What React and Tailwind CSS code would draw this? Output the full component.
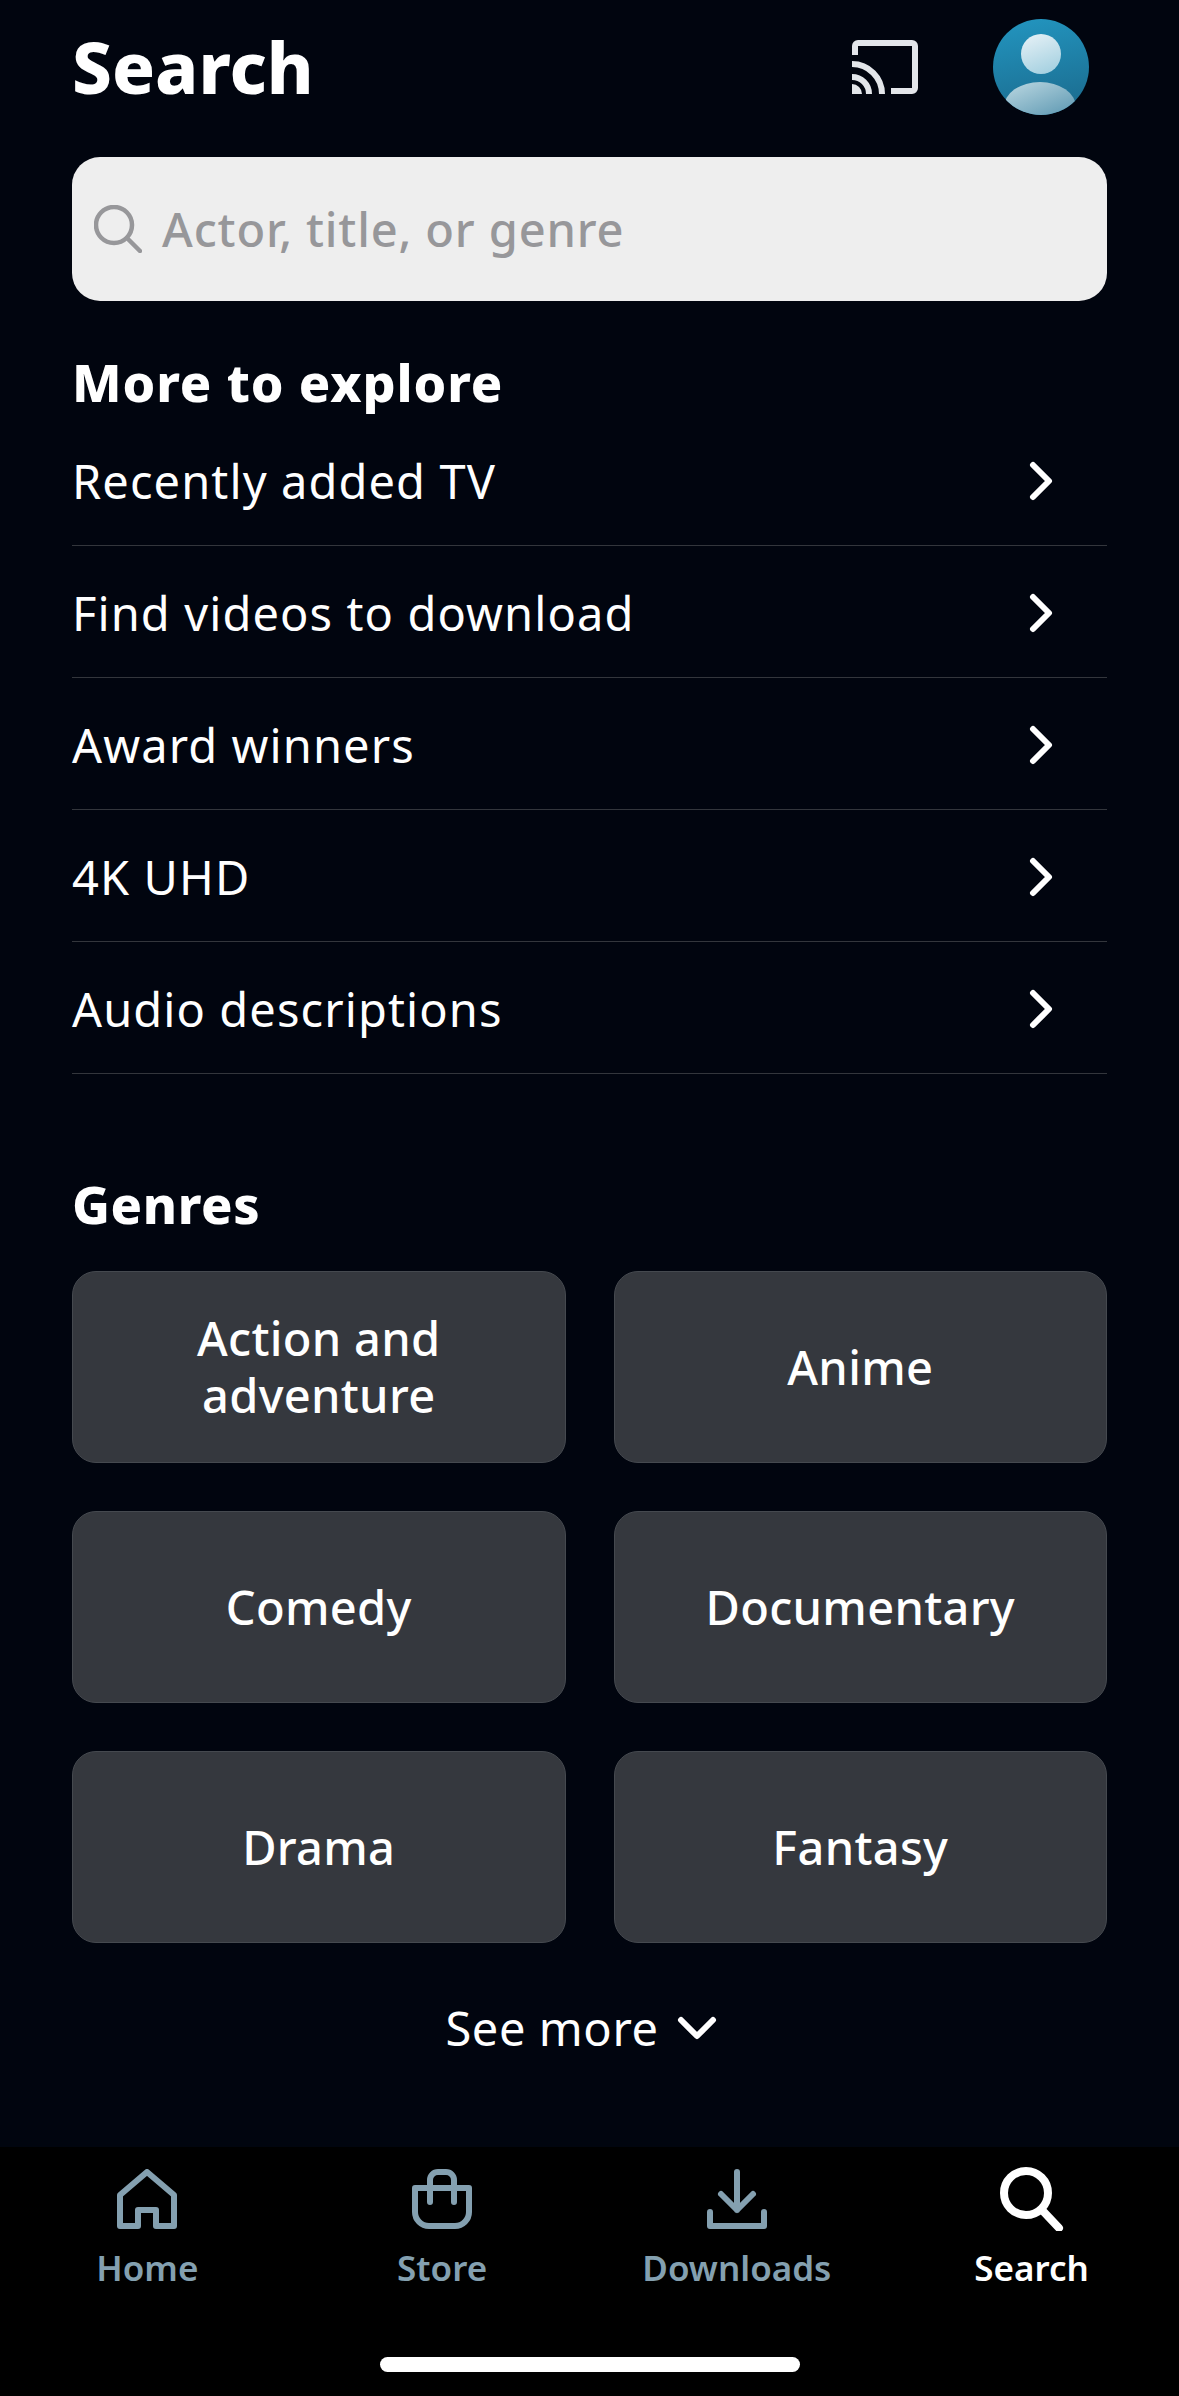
const FONT = "font-['Noto_Sans',sans-serif]"

const exploreRows = ['Recently added TV', 'Find videos to download', 'Award winners', '4K UHD', 'Audio descriptions']

const genres = ['Action and adventure', 'Anime', 'Comedy', 'Documentary', 'Drama', 'Fantasy']

function CastIcon() {
  return (
    <svg width="66" height="54" viewBox="0 0 66 54" fill="none" stroke="#e3e6ea" strokeWidth="6">
      <path d="M3 15V6a3 3 0 0 1 3-3h54a3 3 0 0 1 3 3v42a3 3 0 0 1-3 3H39" />
      <path d="M0 24a30 30 0 0 1 30 30" />
      <path d="M0 37a17 17 0 0 1 17 17" />
      <path d="M0 44a10 10 0 0 1 10 10H0z" fill="#e3e6ea" stroke="none" />
    </svg>
  )
}

function Avatar() {
  return (
    <svg width="96" height="96" viewBox="0 0 96 96">
      <defs>
        <linearGradient id="avatarBg" x1="0.4" y1="0" x2="0.6" y2="1">
          <stop offset="0" stopColor="#2293bd" />
          <stop offset="1" stopColor="#1b6b8e" />
        </linearGradient>
        <linearGradient id="avatarHead" x1="0.3" y1="0" x2="0.7" y2="1">
          <stop offset="0" stopColor="#e2eff5" />
          <stop offset="1" stopColor="#a4d0e0" />
        </linearGradient>
        <linearGradient id="avatarBody" x1="0.2" y1="0" x2="0.8" y2="1">
          <stop offset="0" stopColor="#b4d3de" />
          <stop offset="1" stopColor="#4a8ba8" />
        </linearGradient>
        <clipPath id="avatarClip">
          <circle cx="48" cy="48" r="48" />
        </clipPath>
      </defs>
      <circle cx="48" cy="48" r="48" fill="url(#avatarBg)" />
      <circle cx="48" cy="35" r="20" fill="url(#avatarHead)" />
      <g clipPath="url(#avatarClip)">
        <ellipse cx="47" cy="88" rx="36" ry="25" fill="url(#avatarBody)" />
      </g>
    </svg>
  )
}

function RowChevron() {
  return (
    <svg width="24" height="40" viewBox="0 0 24 40" fill="none" stroke="#fff" strokeWidth="6" strokeLinecap="round" strokeLinejoin="round">
      <path d="M4 4l16 16L4 36" />
    </svg>
  )
}

function HomeIcon() {
  return (
    <svg width="60" height="60" viewBox="0 0 60 60" fill="none" stroke="#84a0b0" strokeWidth="6" strokeLinejoin="round">
      <path d="M30 3L3 26v31h18V41h18v16h18V26z" />
    </svg>
  )
}

function StoreIcon() {
  return (
    <svg width="60" height="60" viewBox="0 0 60 60" fill="none" stroke="#84a0b0" strokeWidth="6" strokeLinecap="round" strokeLinejoin="round">
      <path d="M3 19h54v24a14 14 0 0 1-14 14H17A14 14 0 0 1 3 43z" />
      <path d="M18 33V11a8 8 0 0 1 8-8h8a8 8 0 0 1 8 8v22" />
    </svg>
  )
}

function DownloadIcon() {
  return (
    <svg width="60" height="60" viewBox="0 0 60 60" fill="none" stroke="#84a0b0" strokeWidth="6" strokeLinecap="round" strokeLinejoin="round">
      <path d="M30 3v38M14 25l16 16 16-16" />
      <path d="M3 43v14h54V43" />
    </svg>
  )
}

function SearchNavIcon() {
  return (
    <svg width="64" height="64" viewBox="0 0 64 64" fill="none" stroke="#fff" strokeWidth="8" strokeLinecap="round">
      <circle cx="26" cy="26" r="22" />
      <path d="M42 43l17 18" />
    </svg>
  )
}

function NavItem({ label, active, children }) {
  return (
    <div className="flex flex-col items-center">
      <div className="h-[64px] flex items-center justify-center">{children}</div>
      <span className={`mt-[14px] text-[35px] leading-[46px] font-semibold ${active ? 'text-white' : 'text-[#84a0b0]'}`}>{label}</span>
    </div>
  )
}

export default function App() {
  return (
    <div className={`${FONT} w-[1179px] h-[2396px] bg-[#01050f] text-white flex flex-col overflow-hidden`}>
      <main className="flex-1 px-[72px]">
        <header className="h-[157px] flex items-start justify-between">
          <h1 className="mt-[27px] text-[71px] leading-[80px] font-extrabold">Search</h1>
          <div className="flex items-start mr-[18px]">
            <div className="mt-[40px]"><CastIcon /></div>
            <div className="mt-[19px] ml-[75px]"><Avatar /></div>
          </div>
        </header>

        <div className="h-[144px] w-[1035px] rounded-[28px] bg-[#eeeeee] flex items-center pl-[22px]">
          <svg width="48" height="48" viewBox="0 0 48 48" fill="none" stroke="#97979a" strokeWidth="4.5" strokeLinecap="round">
            <circle cx="20" cy="20" r="18" />
            <path d="M33 33l13 13" />
          </svg>
          <span className="ml-[20px] text-[47px] leading-[60px] font-medium text-[#97979a] tracking-[0.85px]">Actor, title, or genre</span>
        </div>

        <h2 className="mt-[49px] text-[52px] leading-[64px] font-extrabold tracking-[0.9px]">More to explore</h2>
        <ul className="w-[1035px]">
          {exploreRows.map((row) => (
            <li key={row} className="h-[132px] flex items-center justify-between border-b border-[#33363c] pr-[54px] pt-[2px]">
              <span className="text-[47px] leading-[60px] tracking-[1.1px]">{row}</span>
              <RowChevron />
            </li>
          ))}
        </ul>

        <h2 className="mt-[98px] text-[52px] leading-[64px] font-extrabold tracking-[0.6px]">Genres</h2>
        <div className="mt-[35px] grid grid-cols-2 gap-x-[48px] gap-y-[48px] w-[1035px]">
          {genres.map((genre) => (
            <div key={genre} className="h-[192px] rounded-[24px] bg-[#35383e] border border-[#45494f] flex items-center justify-center">
              <span className="w-[360px] text-center text-[47px] leading-[57px] font-medium tracking-[0.3px]">{genre}</span>
            </div>
          ))}
        </div>

        <div className="mt-[53px] flex items-center justify-center gap-[18px] pr-[17px]">
          <span className="text-[47px] leading-[64px] tracking-[0.6px]">See more</span>
          <svg width="40" height="26" viewBox="0 0 40 26" fill="none" stroke="#fff" strokeWidth="6" strokeLinecap="round" strokeLinejoin="round">
            <path d="M4 5l16 16L36 5" />
          </svg>
        </div>
      </main>

      <nav className="h-[249px] bg-black pt-[20px] flex flex-col">
        <div className="grid grid-cols-4 flex-1">
          <NavItem label="Home"><HomeIcon /></NavItem>
          <NavItem label="Store"><StoreIcon /></NavItem>
          <NavItem label="Downloads"><DownloadIcon /></NavItem>
          <NavItem label="Search" active><SearchNavIcon /></NavItem>
        </div>
        <div className="mb-[24px] mx-auto w-[420px] h-[15px] rounded-full bg-white" />
      </nav>
    </div>
  )
}
